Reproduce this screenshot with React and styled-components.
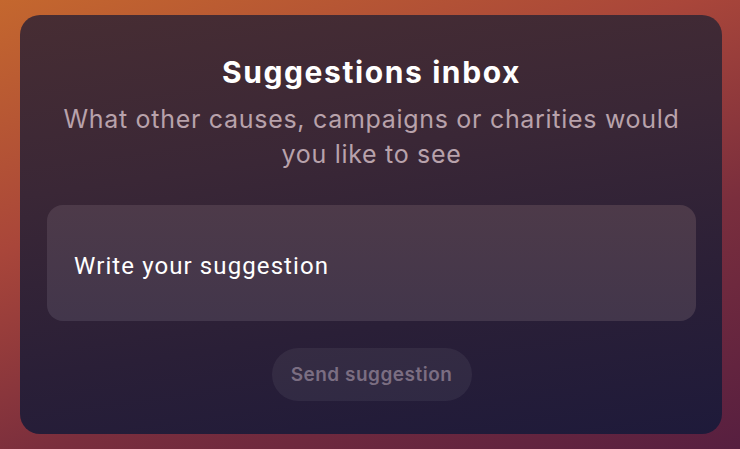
import React from "react";
import styled, { createGlobalStyle } from "styled-components";

const Global = createGlobalStyle`
  html, body { margin: 0; padding: 0; }
  body { width: 740px; height: 449px; overflow: hidden; }
`;

const Page = styled.div`
  box-sizing: border-box;
  width: 740px;
  height: 449px;
  padding: 15px 18px 15px 20px;
  background: linear-gradient(160deg, #c4672e 0%, #a9463a 35%, #7a2e3d 65%, #571f40 100%);
  display: flex;
`;

const Card = styled.section`
  box-sizing: border-box;
  flex: 1;
  border-radius: 20px;
  background: linear-gradient(172deg, #472d33 0%, #3a2736 35%, #2a1f37 70%, #1e1a3a 100%);
  padding: 39px 26px 33px 27px;
  display: flex;
  flex-direction: column;
  align-items: center;
`;

const Title = styled.h1`
  margin: 0;
  font-family: Inter, "Liberation Sans", sans-serif;
  font-weight: 700;
  font-size: 30px;
  line-height: 36px;
  color: #ffffff;
  letter-spacing: 1.6px;
`;

const Subtitle = styled.p`
  margin: 12px 0 0;
  font-family: Inter, "Liberation Sans", sans-serif;
  font-weight: 400;
  font-size: 25px;
  line-height: 35px;
  color: #b8a2ab;
  text-align: center;
  letter-spacing: 0.7px;
  max-width: 640px;
`;

const Field = styled.div`
  box-sizing: border-box;
  align-self: stretch;
  margin-top: 33px;
  height: 116px;
  border-radius: 16px;
  background: linear-gradient(180deg, #4d3a49 0%, #42364b 100%);
  padding: 5px 27px 0;
  display: flex;
  align-items: center;
  font-family: Roboto, "Liberation Sans", sans-serif;
  font-size: 24px;
  letter-spacing: 1.1px;
  color: #ffffff;
`;

const SendButton = styled.button`
  margin-top: 27px;
  width: 200px;
  height: 53px;
  border: none;
  border-radius: 27px;
  background: rgba(255, 255, 255, 0.06);
  font-family: Inter, "Liberation Sans", sans-serif;
  font-weight: 600;
  font-size: 19px;
  letter-spacing: 0.5px;
  color: #7b6e82;
  cursor: default;
`;

export default function App() {
  return (
    <>
      <Global />
      <Page>
        <Card>
          <Title>Suggestions inbox</Title>
          <Subtitle>What other causes, campaigns or charities would you like to see</Subtitle>
          <Field>Write your suggestion</Field>
          <SendButton>Send suggestion</SendButton>
        </Card>
      </Page>
    </>
  );
}
